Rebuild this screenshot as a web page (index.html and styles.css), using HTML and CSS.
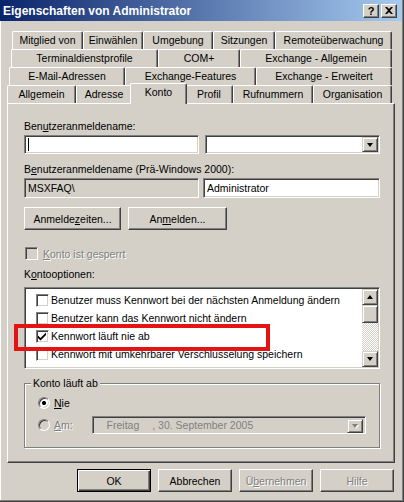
FILE: index.html
```html
<!DOCTYPE html>
<html lang="de">
<head>
<meta charset="utf-8">
<title>Eigenschaften von Administrator</title>
<link rel="stylesheet" href="styles.css">
</head>
<body>
<div class="window">
  <div class="titlebar">
    <span class="title">Eigenschaften von Administrator</span>
    <div class="capbtns">
      <span class="capbtn">?</span>
      <span class="capbtn"><svg width="8" height="7" viewBox="0 0 8 7"><path d="M0 0h2l2 2 2-2h2L5 3.5 8 7H6L4 5 2 7H0l3-3.5z" fill="#000"/></svg></span>
    </div>
  </div>

  <div class="tabs">
    <div class="tabrow r1">
      <div class="tab t-mitglied">Mitglied von</div>
      <div class="tab t-einw">Einwählen</div>
      <div class="tab t-umg">Umgebung</div>
      <div class="tab t-sitz">Sitzungen</div>
      <div class="tab t-remote">Remoteüberwachung</div>
    </div>
    <div class="tabrow r2">
      <div class="tab t-term">Terminaldienstprofile</div>
      <div class="tab t-com">COM+</div>
      <div class="tab t-exall">Exchange - Allgemein</div>
    </div>
    <div class="tabrow r3">
      <div class="tab t-email">E-Mail-Adressen</div>
      <div class="tab t-exfeat">Exchange-Features</div>
      <div class="tab t-exerw">Exchange - Erweitert</div>
    </div>
    <div class="tabrow r4">
      <div class="tab t-allg">Allgemein</div>
      <div class="tab t-adr">Adresse</div>
      <div class="tab active t-konto">Konto</div>
      <div class="tab t-prof">Profil</div>
      <div class="tab t-ruf">Rufnummern</div>
      <div class="tab t-org">Organisation</div>
    </div>
  </div>

  <div class="panel">
    <div class="lbl">Ben<u>u</u>tzeranmeldename:</div>
    <div class="fieldrow r-a">
      <div class="field f-user"><span class="caret"></span></div>
      <div class="field f-combo"><span class="dd"><span class="tri"></span></span></div>
    </div>
    <div class="lbl lbl2">B<u>e</u>nutzeranmeldename (Prä-Windows 2000):</div>
    <div class="fieldrow r-b">
      <div class="field disabled f-dom">MSXFAQ\</div>
      <div class="field f-adm">Administrator</div>
    </div>
    <div class="btnrow">
      <div class="btn b-zeiten">Anmelde<u>z</u>eiten...</div>
      <div class="btn b-anm">An<u>m</u>elden...</div>
    </div>
    <div class="chkrow disabled-text">
      <span class="chk off"></span>
      <span><u>K</u>onto ist gesperrt</span>
    </div>
    <div class="lbl lbl3">K<u>o</u>ntooptionen:</div>
    <div class="listbox">
      <div class="items">
        <div class="item"><span class="chk"></span><span>Benutzer muss Kennwort bei der nächsten Anmeldung ändern</span></div>
        <div class="item"><span class="chk"></span><span>Benutzer kann das Kennwort nicht ändern</span></div>
        <div class="item"><span class="chk"><svg width="9" height="9" viewBox="0 0 9 9"><path d="M0 3.5l2.5 2.5L8 0.5V3L2.5 8.5 0 6z" fill="#000"/></svg></span><span>Kennwort läuft nie ab</span></div>
        <div class="item"><span class="chk"></span><span>Kennwort mit umkehrbarer Verschlüsselung speichern</span></div>
      </div>
      <div class="scrollbar">
        <span class="sbtn"><span class="tri up"></span></span>
        <span class="thumb"></span>
        <span class="track"></span>
        <span class="sbtn"><span class="tri"></span></span>
      </div>
    </div>
    <div class="group">
      <span class="legend">Konto läuft ab</span>
      <div class="radiorow">
        <span class="radio on"></span><span><u>N</u>ie</span>
      </div>
      <div class="radiorow am">
        <span class="radio off"></span><span class="amlbl disabled-text"><u>A</u>m:</span>
        <div class="field disabled datefld"><span class="dt1">Freitag</span><span>, 30. September 2005</span><span class="dd ddoff"><span class="tri gray"></span></span></div>
      </div>
    </div>
  </div>

  <div class="dlgbtns">
    <div class="btn default">OK</div>
    <div class="btn">Abbrechen</div>
    <div class="btn disabled-text">Ü<u>b</u>ernehmen</div>
    <div class="btn disabled-text">Hilfe</div>
  </div>

  <div class="highlight"></div>
</div>
</body>
</html>
```
FILE: styles.css
```css
* { box-sizing: border-box; }
body {
  margin: 0;
  background: #d4d0c8;
  font-family: "Liberation Sans", Arial, sans-serif;
  font-size: 10.5px;
  color: #000;
}
u { text-decoration: underline; text-underline-offset: 1px; }

.window {
  position: relative;
  width: 404px;
  height: 502px;
  background: #d4d0c8;
  border-right: 1px solid #404040;
  border-bottom: 1px solid #404040;
  box-shadow: inset -1px -1px #808080, inset 1px 0 #fff;
  padding: 0 1px 1px 0;
  display: flex;
  flex-direction: column;
}

.titlebar {
  height: 21px;
  flex: none;
  display: flex;
  align-items: center;
  padding-left: 3px;
  background: linear-gradient(to right, #0a246a, #a6caf0);
  color: #fff;
  font-weight: bold;
  font-size: 12px;
}
.capbtns { margin-left: auto; margin-right: 5px; display: flex; gap: 2px; }
.capbtn {
  width: 16px; height: 14px;
  background: #d4d0c8;
  border: 1px solid; border-color: #fff #404040 #404040 #fff;
  box-shadow: inset -1px -1px #808080;
  color: #000;
  font-size: 11px;
  line-height: 12px;
  text-align: center;
  display: flex; align-items: center; justify-content: center;
}

/* tabs */
.tabs { margin-top: 10px; flex: none; }
.tabrow { display: flex; height: 18px; }
.r1 { margin-left: 12px; width: 380px; }
.r2 { margin-left: 11px; width: 381px; }
.r3 { margin-left: 9px; width: 383px; }
.r4 { margin-left: 7px; width: 385px; align-items: flex-end; }
.tab {
  flex: none;
  height: 18px;
  background: #d4d0c8;
  border-top: 1px solid #fff;
  border-left: 1px solid #fff;
  border-right: 1px solid #404040;
  box-shadow: inset -1px 0 #808080;
  border-radius: 2px 2px 0 0;
  text-align: center;
  line-height: 17px;
  white-space: nowrap;
}
.t-mitglied { width: 71px; } .t-einw { width: 60px; } .t-umg { width: 70px; }
.t-sitz { width: 62px; } .t-remote { width: 117px; }
.t-term { width: 147px; } .t-com { width: 82px; } .t-exall { width: 152px; }
.t-email { width: 116px; } .t-exfeat { width: 131px; } .t-exerw { width: 136px; }
.t-allg { width: 69px; } .t-adr { width: 56px; } .t-konto { width: 57px; }
.t-prof { width: 48px; } .t-ruf { width: 80px; } .t-org { width: 79px; }
.tab.active {
  position: relative;
  z-index: 2;
  height: 21px;
  margin: 0 -2px -1px -2px;
  line-height: 16px;
}

/* panel */
.panel {
  flex: none;
  margin-left: 7px;
  width: 388px;
  height: 360px;
  border: 1px solid;
  border-color: #fff #404040 #404040 #fff;
  box-shadow: inset -1px -1px #808080;
  padding: 16px 14px 0 16px;
}
.lbl { height: 13px; line-height: 13px; white-space: nowrap; }
.fieldrow { display: flex; }
.r-a { margin-top: 2px; height: 19px; gap: 6px; }
.lbl2 { margin-top: 9px; }
.r-b { margin-top: 2px; height: 20px; gap: 4px; }
.field {
  position: relative;
  height: 100%;
  background: #fff;
  border: 1px solid;
  border-color: #808080 #fff #fff #808080;
  box-shadow: inset 1px 1px #404040, inset -1px -1px #d4d0c8;
  padding-left: 3px;
  display: flex;
  align-items: center;
  white-space: nowrap;
}
.field.disabled { background: #d4d0c8; }
.f-user { width: 175px; }
.f-combo { width: 175px; justify-content: flex-end; padding: 1px; }
.f-dom { width: 175px; }
.f-adm { width: 177px; }
.caret { width: 1px; height: 13px; background: #000; }

.dd {
  width: 16px; height: 100%;
  background: #d4d0c8;
  border: 1px solid; border-color: #d4d0c8 #404040 #404040 #d4d0c8;
  box-shadow: inset 1px 1px #fff, inset -1px -1px #808080;
  display: flex; align-items: center; justify-content: center;
}
.tri {
  width: 0; height: 0;
  border-left: 3.5px solid transparent;
  border-right: 3.5px solid transparent;
  border-top: 4px solid #000;
}
.tri.up { border-top: 0; border-bottom: 4px solid #000; }
.tri.gray { border-top-color: #808080; filter: drop-shadow(1px 1px 0 #fff); }

.btnrow { display: flex; gap: 7px; margin-top: 9px; height: 23px; }
.btn {
  height: 23px;
  background: #d4d0c8;
  border: 1px solid; border-color: #fff #404040 #404040 #fff;
  box-shadow: inset -1px -1px #808080;
  display: flex; align-items: center; justify-content: center;
  white-space: nowrap;
}
.b-zeiten { width: 97px; }
.b-anm { width: 99px; }

.disabled-text { color: #808080; text-shadow: 1px 1px 0 #fff; }

.chkrow { display: flex; align-items: center; gap: 5px; margin-top: 17px; height: 13px; padding-left: 1px; }
.chk {
  flex: none;
  width: 13px; height: 13px;
  background: #fff;
  border: 1px solid; border-color: #808080 #fff #fff #808080;
  box-shadow: inset 1px 1px #404040, inset -1px -1px #d4d0c8;
  display: flex; align-items: center; justify-content: center;
}
.chk.off { background: #d4d0c8; }
.chk svg { display: block; }

.lbl3 { margin-top: 8px; }

.listbox {
  margin-top: 6px;
  height: 82px;
  background: #fff;
  border: 1px solid;
  border-color: #808080 #fff #fff #808080;
  box-shadow: inset 1px 1px #404040, inset -1px -1px #d4d0c8;
  padding: 1px;
  display: flex;
  overflow: hidden;
}
.items { flex: 1; padding: 2px 0 0 10px; overflow: hidden; }
.item { display: flex; align-items: center; gap: 2px; height: 18px; white-space: nowrap; }
.scrollbar { flex: none; width: 16px; display: flex; flex-direction: column; }
.sbtn, .thumb {
  flex: none;
  width: 16px; height: 16px;
  background: #d4d0c8;
  border: 1px solid; border-color: #d4d0c8 #404040 #404040 #d4d0c8;
  box-shadow: inset 1px 1px #fff, inset -1px -1px #808080;
  display: flex; align-items: center; justify-content: center;
}
.thumb { height: 18px; }
.track {
  flex: 1;
  background: repeating-conic-gradient(#fff 0 25%, #d4d0c8 0 50%) 0 0 / 2px 2px;
}

.group {
  position: relative;
  margin-top: 14px;
  height: 65px;
  border: 1px solid #808080;
  box-shadow: inset 1px 1px #fff, 1px 1px #fff;
  padding: 11px 13px 0 13px;
}
.legend {
  position: absolute;
  top: -7px; left: 6px;
  padding: 0 2px;
  background: #d4d0c8;
  line-height: 13px;
}
.radiorow { display: flex; align-items: center; height: 16px; gap: 4px; }
.radiorow.am { margin-top: 5px; height: 18px; }
.radio {
  flex: none;
  width: 12px; height: 12px;
  border-radius: 50%;
  border: 1px solid; border-color: #808080 #fff #fff #808080;
  box-shadow: inset 1px 1px #404040, inset -1px -1px #d4d0c8;
  background: #fff;
}
.radio.on { background: radial-gradient(circle, #000 0 2px, #fff 2.2px); }
.radio.off { background: #d4d0c8; }
.amlbl { width: 34px; }
.datefld {
  width: 278px;
  padding-left: 14px;
  color: #808080;
  text-shadow: none;
}
.dt1 { margin-right: 13px; }
.ddoff { position: absolute; right: 2px; top: 2px; height: 14px; }

.dlgbtns {
  display: flex;
  gap: 7px;
  margin-top: 6px;
  padding-left: 77px;
}
.dlgbtns .btn { width: 74px; }
.btn.default {
  border: 1px solid #000;
  box-shadow: inset 1px 1px #fff, inset -1px -1px #404040, inset -2px -2px #808080;
}

.highlight {
  position: absolute;
  left: 14px; top: 324px;
  width: 256px; height: 27px;
  border: 4px solid #e41414;
}
```
